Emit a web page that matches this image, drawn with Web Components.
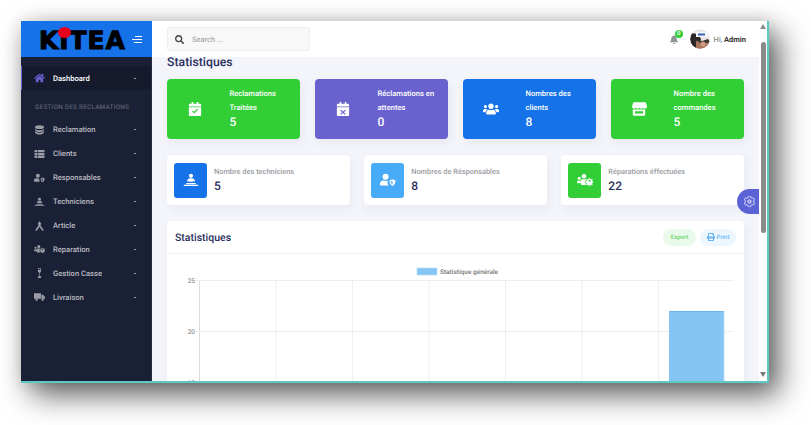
<!DOCTYPE html>
<html lang="fr"><head><meta charset="utf-8"><title>KiTEA</title>
<style>
html,body{margin:0;background:#fff;font-family:Roboto,"Liberation Sans",sans-serif;overflow:hidden;text-rendering:geometricPrecision}
body{width:811px;height:425px;padding:21px 0 0 21px;box-sizing:border-box}
</style></head><body>
<app-window>
  <side-bar slot="side">
    <side-item icon="home" active>Dashboard</side-item>
    <side-section>GESTION DES RECLAMATIONS</side-section>
    <side-item icon="layers">Reclamation</side-item>
    <side-item icon="list">Clients</side-item>
    <side-item icon="usershield">Responsables</side-item>
    <side-item icon="tech">Techniciens</side-item>
    <side-item icon="article">Article</side-item>
    <side-item icon="repair">Reparation</side-item>
    <side-item icon="glass">Gestion Casse</side-item>
    <side-item icon="truck">Livraison</side-item>
  </side-bar>
  <top-bar slot="top"></top-bar>
  <page-title>Statistiques</page-title>
  <card-row gap="15" mb="16">
    <stat-card color="#31ce36" icon="calcheck" value="5">Reclamations Traitées</stat-card>
    <stat-card color="#6861ce" icon="calx" value="0">Réclamations en attentes</stat-card>
    <stat-card color="#1572e8" icon="users" value="8">Nombres des clients</stat-card>
    <stat-card color="#31ce36" icon="store" value="5">Nombre des commandes</stat-card>
  </card-row>
  <card-row gap="14.5" mb="16">
    <mini-card color="#1572e8" icon="tech" value="5">Nombre des techniciens</mini-card>
    <mini-card color="#48abf7" icon="usershield" value="8">Nombres de Résponsables</mini-card>
    <mini-card color="#31ce36" icon="repair" value="22">Réparations éffectuées</mini-card>
  </card-row>
  <chart-card>Statistiques</chart-card>
</app-window>
<script>
const PATHS={
home:[576,'<path d="M280.37 148.26L96 300.11V464a16 16 0 0 0 16 16l112.06-.29a16 16 0 0 0 15.92-16V368a16 16 0 0 1 16-16h64a16 16 0 0 1 16 16v95.64a16 16 0 0 0 16 16.05L464 480a16 16 0 0 0 16-16V300L295.67 148.26a12.19 12.19 0 0 0-15.3 0zM571.6 251.47L488 182.56V44.05a12 12 0 0 0-12-12h-56a12 12 0 0 0-12 12v72.61L318.47 43a48 48 0 0 0-61 0L4.34 251.47a12 12 0 0 0-1.6 16.9l25.5 31A12 12 0 0 0 45.15 301l235.22-193.74a12.19 12.19 0 0 1 15.3 0L530.9 301a12 12 0 0 0 16.9-1.6l25.5-31a12 12 0 0 0-1.7-16.93z"/>'],
search:[512,'<path d="M505 442.7L405.3 343c-4.5-4.5-10.6-7-17-7H372c27.6-35.3 44-79.7 44-128C416 93.1 322.9 0 208 0S0 93.1 0 208s93.1 208 208 208c48.3 0 92.7-16.4 128-44v16.3c0 6.4 2.5 12.5 7 17l99.7 99.7c9.4 9.4 24.6 9.4 33.9 0l28.3-28.3c9.4-9.4 9.4-24.6.1-34zM208 336c-70.7 0-128-57.2-128-128 0-70.7 57.2-128 128-128 70.7 0 128 57.2 128 128 0 70.7-57.2 128-128 128z"/>'],
bell:[448,'<path d="M224 512c35.32 0 63.97-28.65 63.97-64H160.03c0 35.35 28.65 64 63.97 64zm215.39-149.71c-19.32-20.76-55.47-51.99-55.47-154.29 0-77.7-54.48-139.9-127.94-155.16V32c0-17.67-14.32-32-31.98-32s-31.98 14.33-31.98 32v20.84C118.56 68.1 64.08 130.3 64.08 208c0 102.3-36.15 133.53-55.47 154.29-6 6.45-8.66 14.16-8.61 21.71.11 16.4 12.98 32 32.1 32h383.8c19.12 0 32-15.6 32.1-32 .05-7.55-2.61-15.27-8.61-21.71z"/>'],
users:[640,'<path d="M96 224c35.3 0 64-28.7 64-64s-28.7-64-64-64-64 28.7-64 64 28.7 64 64 64zm448 0c35.3 0 64-28.7 64-64s-28.7-64-64-64-64 28.7-64 64 28.7 64 64 64zm32 32h-64c-17.6 0-33.5 7.1-45.1 18.6 40.3 22.1 68.9 62 75.1 109.4h66c17.7 0 32-14.3 32-32v-32c0-35.3-28.7-64-64-64zm-256 0c61.9 0 112-50.1 112-112S381.9 32 320 32 208 82.1 208 144s50.1 112 112 112zm76.8 32h-8.3c-20.8 10-43.9 16-68.5 16s-47.6-6-68.5-16h-8.3C179.6 288 128 339.6 128 403.2V432c0 26.5 21.5 48 48 48h288c26.5 0 48-21.5 48-48v-28.8c0-63.6-51.6-115.2-115.2-115.2zm-223.7-13.4C161.5 263.1 145.6 256 128 256H64c-35.3 0-64 28.7-64 64v32c0 17.7 14.3 32 32 32h65.9c6.3-47.4 34.9-87.3 75.2-109.4z"/>'],
cog:[512,'<path d="M487.4 315.7l-42.6-24.6c4.3-23.2 4.3-47 0-70.2l42.6-24.6c4.9-2.8 7.1-8.6 5.5-14-11.1-35.6-30-67.8-54.7-94.6-3.8-4.1-10-5.1-14.8-2.3L380.8 110c-17.9-15.4-38.5-27.3-60.8-35.1V25.8c0-5.6-3.9-10.5-9.4-11.7-36.7-8.2-74.3-7.8-109.2 0-5.5 1.2-9.4 6.1-9.4 11.7V75c-22.2 7.9-42.8 19.8-60.8 35.1L88.7 85.5c-4.9-2.8-11-1.9-14.8 2.3-24.7 26.7-43.6 58.9-54.7 94.6-1.7 5.4.6 11.2 5.5 14L67.3 221c-4.3 23.2-4.3 47 0 70.2l-42.6 24.6c-4.9 2.8-7.1 8.6-5.5 14 11.1 35.6 30 67.8 54.7 94.6 3.8 4.1 10 5.1 14.8 2.3l42.6-24.6c17.9 15.4 38.5 27.3 60.8 35.1v49.2c0 5.6 3.9 10.5 9.4 11.7 36.7 8.2 74.3 7.8 109.2 0 5.5-1.2 9.4-6.1 9.4-11.7v-49.2c22.2-7.9 42.8-19.8 60.8-35.1l42.6 24.6c4.9 2.8 11 1.9 14.8-2.3 24.7-26.7 43.6-58.9 54.7-94.6 1.5-5.5-.7-11.3-5.6-14.1zM256 336c-44.1 0-80-35.9-80-80s35.9-80 80-80 80 35.9 80 80-35.9 80-80 80z" fill="none" stroke="currentColor" stroke-width="40"/><circle cx="256" cy="256" r="55" fill="none" stroke="currentColor" stroke-width="36"/>'],
layers:[512,'<ellipse cx="256" cy="110" rx="230" ry="100"/><path d="M26 190c30 55 120 82 230 82s200-27 230-82v76c-30 58-120 90-230 90S56 324 26 266z"/><path d="M26 310c30 55 120 82 230 82s200-27 230-82v76c-30 62-120 104-230 104S56 448 26 386z"/>'],
list:[512,'<path d="M0 50h140v115H0zM170 50h342v115H170zM0 200h140v115H0zM170 200h342v115H170zM0 350h140v115H0zM170 350h342v115H170z"/>'],
usershield:[640,'<circle cx="224" cy="128" r="118"/><path d="M20 480c-11 0-20-9-20-20v-60c0-70 56-124 124-124h50c30 16 62 22 100 14h30v90c0 40 18 76 50 100z"/><path d="M500 230l120 50c0 110-44 180-120 216-76-36-120-106-120-216z"/><path d="M500 290v150c-40-24-62-70-64-122z" fill="var(--cut,#fff)"/>'],
tech:[640,'<circle cx="320" cy="90" r="84"/><path d="M210 210c20-20 60-26 110-26s90 6 110 26l60 90-50 26-40-50v54H240v-54l-40 50-50-26z"/><rect x="130" y="380" width="380" height="46" rx="8"/><rect x="30" y="450" width="580" height="42" rx="6"/>'],
article:[512,'<path d="M256 10l90 130-46 74 190 270h-110L256 300 132 484H22l190-270-46-74z"/>'],
repair:[640,'<circle cx="280" cy="110" r="90"/><circle cx="90" cy="190" r="62"/><path d="M30 290h110c20 0 34 16 34 34v60H30c-18 0-30-14-30-30v-30c0-20 14-34 30-34z"/><path d="M190 230h170c10 40 10 170 20 230H200c-22 0-40-18-40-40v-130c0-30 12-60 30-60z"/><path d="M474 170h52l10 36 34 14 32-18 36 36-18 32 14 34 36 10v52l-36 10-14 34 18 32-36 36-32-18-34 14-10 36h-52l-10-36-34-14-32 18-36-36 18-32-14-34-36-10v-52l36-10 14-34-18-32 36-36 32 18 34-14z" stroke="var(--cut,#fff)" stroke-width="26"/><circle cx="500" cy="290" r="40" fill="var(--cut,#fff)"/>'],
glass:[256,'<path d="M48 0h160v170c0 44-34 72-64 78v170h50c10 0 18 8 18 18v60c0 8-8 16-16 16H60c-8 0-16-8-16-16v-60c0-10 8-18 18-18h50V248c-30-6-64-34-64-78z"/><rect x="78" y="34" width="100" height="70" fill="var(--cut,#1a2035)"/>'],
truck:[640,'<path d="M20 40h360c14 0 24 10 24 24v300H20C8 364 0 354 0 340V64c0-14 10-24 20-24zM430 130h90c8 0 16 4 22 10l88 98c6 6 10 14 10 22v104h-210z"/><circle cx="150" cy="410" r="70"/><circle cx="500" cy="410" r="70"/>'],
calcheck:[448,'<path d="M100 0h60v64H288V0h60v64h60c22 0 40 18 40 40v56H0v-56c0-22 18-40 40-40h60z"/><path fill-rule="evenodd" d="M0 190h448v282c0 22-18 40-40 40H40c-22 0-40-18-40-40zM115 340l30-30 50 50 110-110 30 30-140 140z"/>'],
calx:[448,'<path d="M100 0h60v64H288V0h60v64h60c22 0 40 18 40 40v56H0v-56c0-22 18-40 40-40h60z"/><path fill-rule="evenodd" d="M0 190h448v282c0 22-18 40-40 40H40c-22 0-40-18-40-40zM150 280l-30 30 74 64-74 64 30 30 74-66 74 66 30-30-74-64 74-64-30-30-74 64z"/>'],
store:[616,'<path d="M70 0h476c10 0 20 6 24 14l44 130c12 50-22 100-72 100-30 0-56-14-72-36-16 22-42 36-72 36s-56-14-70-36c-16 22-42 36-72 36s-56-14-70-36c-16 22-42 36-72 36-50 0-84-50-72-100l44-130c4-8 14-14 24-14z"/><path fill-rule="evenodd" d="M70 280h476v206c0 14-12 26-26 26H96c-14 0-26-12-26-26zM150 340v90h316v-90z"/>'],
print:[512,'<path d="M448 192V77.25c0-8.49-3.37-16.62-9.37-22.63L393.37 9.37c-6-6-14.14-9.37-22.63-9.37H96C78.33 0 64 14.33 64 32v160c-35.35 0-64 28.65-64 64v112c0 8.84 7.16 16 16 16h48v96c0 17.67 14.33 32 32 32h320c17.67 0 32-14.33 32-32v-96h48c8.84 0 16-7.16 16-16V256c0-35.35-28.65-64-64-64zm-64 256H128v-96h256v96zm0-224H128V64h192v48c0 8.84 7.16 16 16 16h48v96z"/>']
};
function icon(name,w,h){const p=PATHS[name];return `<svg xmlns="http://www.w3.org/2000/svg" viewBox="0 0 ${p[0]} 512" width="${w}" height="${h||w}" fill="currentColor" aria-hidden="true">${p[1]}</svg>`}
function def(tag,build){customElements.define(tag,class extends HTMLElement{connectedCallback(){if(this.shadowRoot)return;const r=this.attachShadow({mode:'open'});r.innerHTML=build(this)}})}

def('app-window',()=>`<style>
:host{display:grid;grid-template-columns:131px 607px 8px;grid-template-rows:36px 1fr;width:748px;height:362px;box-sizing:border-box;background:#f4f5fb;border-right:2px solid #5cc9c4;border-bottom:2px solid #5cc9c4;box-shadow:10px 12px 28px rgba(0,0,0,.62),0 0 16px rgba(0,0,0,.12)}
.brand{background:#1572e8;display:flex;align-items:center;position:relative;padding-left:18px}
.logo{font:700 25px/1 "DejaVu Sans",sans-serif;color:#000;-webkit-text-stroke:1px #000;letter-spacing:.9px;margin-top:3px;width:93px;white-space:nowrap}
.dot{position:absolute;left:37px;top:6px;width:13px;height:11px;border-radius:50%;background:#e8001c}
.tog{display:flex;flex-direction:column;align-items:flex-end;gap:2px;margin-left:0;width:10px}
.tog i{display:block;height:1px;background:#fff}
.side{grid-row:2;min-height:0;overflow:hidden}
.main{grid-row:2;overflow:hidden;padding:0 15px;min-height:0;position:relative}
.sb{grid-column:3;grid-row:1/3;background:#fff;display:flex;flex-direction:column;align-items:center;padding-top:3px;box-sizing:border-box}
.up,.dn{width:0;height:0;border-left:3px solid transparent;border-right:3px solid transparent}
.up{border-bottom:5px solid #8c8c8c}.dn{border-top:5px solid #777;margin-top:auto;margin-bottom:4px}
.th{width:5px;height:191px;margin-top:13px;background:#8a8a8a;border-radius:3px}
.gear{position:absolute;right:0;top:132px;width:22px;height:25px;background:#5b62d6;border-radius:13px 0 0 13px;color:#e8e9ff;display:flex;align-items:center;justify-content:center;padding-left:2px;box-sizing:border-box}
.top{grid-column:2;grid-row:1}
</style>
<div class="brand"><span class="logo">KITEA</span><span class="dot"></span><span class="tog"><i style="width:7px"></i><i style="width:10px"></i><i style="width:8px"></i></span></div>
<div class="top"><slot name="top"></slot></div>
<div class="sb"><span class="up"></span><span class="th"></span><span class="dn"></span></div>
<div class="side"><slot name="side"></slot></div>
<div class="main"><slot></slot><span class="gear">${icon('cog',11)}</span></div>`);

def('side-bar',()=>`<style>:host{display:block;height:100%;background:#1a2035;padding-top:9px;box-sizing:border-box;border-right:1px solid #252c44}</style><slot></slot>`);

def('side-item',el=>{const a=el.hasAttribute('active');return `<style>
:host{display:flex;align-items:center;height:${a?24:23.9}px;box-sizing:border-box;color:${a?'#fff':'#b9bac0'};font-size:7.6px;font-weight:500;${a?'background:#151a2c;border-left:1px solid #6861ce;':'padding-left:1px;'}--cut:#1a2035}
.i{width:31px;display:flex;justify-content:center;padding-left:4px;box-sizing:border-box;color:${a?'#6861ce':'#9b9ca6'}}
.t{flex:1}
.c{width:2px;height:1px;background:#9b9ca6;margin-right:15px}
</style><span class="i">${icon(el.getAttribute('icon'),11,10)}</span><span class="t"><slot></slot></span><span class="c"></span>`});

def('side-section',()=>`<style>:host{display:flex;align-items:center;height:28px;padding:5px 0 0 14px;box-sizing:border-box;font-size:6.4px;font-weight:500;letter-spacing:.22px;color:#5f6272;white-space:nowrap}</style><slot></slot>`);

def('top-bar',()=>`<style>
:host{display:flex;align-items:center;height:36px;background:#fff;padding:0 13px 0 15px;box-sizing:border-box}
.s{width:143px;height:24px;background:#f8f8f8;border:1px solid #eeeeee;border-radius:3px;box-sizing:border-box;display:flex;align-items:center;padding-left:7px;gap:8px;font-size:7.5px;color:#444}
.s span{color:#999}
.b{margin-left:auto;position:relative;color:#8d9498;display:flex;margin-right:12px;margin-top:1px}
.n{position:absolute;left:5px;top:-5.5px;width:8.5px;height:8.5px;border-radius:50%;background:#31ce36;color:#fff;font-size:6px;line-height:8.5px;text-align:center;font-weight:500}
.a{width:20px;height:20px;border-radius:50%;margin-right:4px;flex:none}
.h{font-size:7.5px;color:#666}.h b{color:#333;font-weight:700}
</style>
<div class="s">${icon('search',9)}<span>Search ...</span></div>
<div class="b">${icon('bell',8,9)}<span class="n">0</span></div>
<svg class="a" viewBox="0 0 20 20"><defs><clipPath id="c"><circle cx="10" cy="10" r="10"/></clipPath></defs><g clip-path="url(#c)"><rect width="20" height="20" fill="#e9e6e4"/><path d="M0 4l8 1 3 5-3 10H0z" fill="#2a2626"/><rect x="6" y="3" width="12" height="5" fill="#f5f7fb"/><rect x="8" y="4.5" width="7" height="2" fill="#3a62b0"/><path d="M6 12h14v8H6z" fill="#a9735c"/><path d="M4 10l8 2 6-2 2 3-8 2z" fill="#3a3535"/><circle cx="13" cy="15" r="2.5" fill="#d19b83"/></g></svg>
<div class="h">Hi, <b>Admin</b></div>`);

def('page-title',()=>`<style>:host{display:block;height:11px;line-height:11px;margin-bottom:11px;font-size:12.2px;font-weight:500;color:#2a2f5b;letter-spacing:.05px;white-space:nowrap}</style><slot></slot>`);

def('card-row',el=>`<style>:host{display:flex;gap:${el.getAttribute('gap')}px;margin-bottom:${el.getAttribute('mb')}px}::slotted(*){flex:1 1 0;min-width:0}</style><slot></slot>`);

def('stat-card',el=>`<style>
:host{display:flex;align-items:center;height:60px;border-radius:4px;background:${el.getAttribute('color')};color:#fff;box-shadow:2px 4px 10px rgba(69,65,78,.07);box-sizing:border-box;--cut:${el.getAttribute('color')}}
.i{width:55px;flex:none;display:flex;justify-content:center;margin-right:7.5px}
.l{font-size:7.6px;font-weight:500;line-height:13.7px}
.v{font-size:12px;font-weight:500;line-height:16px}
.t{padding-bottom:1px;padding-right:8px}
</style><span class="i">${icon(el.getAttribute('icon'),16,14)}</span><div class="t"><div class="l"><slot></slot></div><div class="v">${el.getAttribute('value')}</div></div>`);

def('mini-card',el=>`<style>
:host{display:flex;align-items:center;height:50px;padding-left:7px;border-radius:4px;background:#fff;box-shadow:2px 4px 10px rgba(69,65,78,.06);box-sizing:border-box;--cut:${el.getAttribute('color')}}
.i{width:33px;height:35px;flex:none;background:${el.getAttribute('color')};border-radius:3px;color:#fff;display:flex;align-items:center;justify-content:center;margin-right:7px}
.l{font-size:7.4px;font-weight:500;color:#9a9ca3;line-height:11px;white-space:nowrap}
.v{font-size:12px;font-weight:500;color:#2a2f5b;line-height:16px;margin-top:1px}
</style><span class="i">${icon(el.getAttribute('icon'),16,14)}</span><div><div class="l"><slot></slot></div><div class="v">${el.getAttribute('value')}</div></div>`);

def('chart-card',()=>{
 const vx=[32.5,109,185.5,262,338.5,415,491.5,567];
 return `<style>
:host{display:block;height:300px;background:#fff;border-radius:4px 4px 0 0;box-shadow:2px 4px 10px rgba(69,65,78,.06)}
.h{display:flex;align-items:center;height:32px;padding:0 8px;border-bottom:1px solid #f0f0f4}
.t{font-size:10.5px;font-weight:500;color:#2a2f5b;flex:1}
.b{height:17px;border-radius:9px;font-size:6px;font-weight:500;display:flex;align-items:center;justify-content:center;gap:2px;box-sizing:border-box}
.e{width:33px;background:#e9f9ea;color:#6ad36e;margin-right:4px}
.p{width:36px;background:#ecf6fe;color:#6bb6f5}
svg.c{display:block}
text{font-family:Roboto,"Liberation Sans",sans-serif;font-size:6.5px;fill:#777}
</style>
<div class="h"><span class="t"><slot></slot></span><span class="b e">Export</span><span class="b p">${icon('print',8)}Print</span></div>
<svg class="c" width="577" height="140" viewBox="0 0 577 140">
<rect x="250" y="14" width="20" height="7" fill="#85c5f3" stroke="#b5dcf8" stroke-width=".7"/>
<text x="273" y="19.5" style="font-weight:500">Statistique générale</text>
${vx.slice(0,7).map(x=>`<line x1="${x}" x2="${x}" y1="26" y2="140" stroke="${x===32.5?'#dcdcdc':'#efefef'}" stroke-width="1"/>`).join('')}
${[26.5,77.5].map(y=>`<line x1="28" x2="567" y1="${y}" y2="${y}" stroke="#eeeeee" stroke-width="1"/>`).join('')}
<rect x="502" y="57" width="55" height="80" fill="#85c5f3"/><rect x="502" y="57" width="55" height="1" fill="#6cb4ee"/><rect x="556.5" y="57" width="1" height="80" fill="#b5dcf8"/>
<text x="28" y="29" text-anchor="end">25</text><text x="28" y="80" text-anchor="end">20</text><text x="28" y="131" text-anchor="end">15</text>
</svg>`});
</script>
</body></html>
